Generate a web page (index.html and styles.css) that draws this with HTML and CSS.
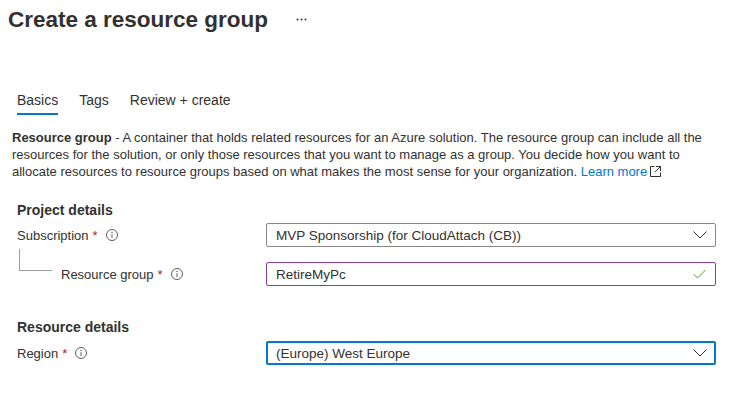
FILE: index.html
```html
<!DOCTYPE html>
<html lang="en">
<head>
<meta charset="utf-8">
<title>Create a resource group</title>
<link rel="stylesheet" href="styles.css">
</head>
<body>
<div class="page">
  <header class="titlebar">
    <h1 class="title">Create a resource group</h1>
    <span class="more" aria-label="More">
      <svg width="11" height="3" viewBox="0 0 11 3"><circle cx="1.5" cy="1.5" r="1" fill="#323130"/><circle cx="5.5" cy="1.5" r="1" fill="#323130"/><circle cx="9.5" cy="1.5" r="1" fill="#323130"/></svg>
    </span>
  </header>

  <nav class="tabs">
    <span class="tab active">Basics</span>
    <span class="tab">Tags</span>
    <span class="tab">Review + create</span>
  </nav>

  <p class="desc"><strong>Resource group</strong> - A container that holds related resources for an Azure solution. The resource group can include all the<br>resources for the solution, or only those resources that you want to manage as a group. You decide how you want to<br>allocate resources to resource groups based on what makes the most sense for your organization. <a class="link" href="#">Learn more<svg class="ext" width="11" height="11" viewBox="0 0 11 11"><path d="M4.5 0.5H0.5V10.5H10.5V6.5" fill="none" stroke="#323130" stroke-width="1"/><path d="M5 6L10.3 0.7M6 0.5H10.5V5" fill="none" stroke="#323130" stroke-width="1"/></svg></a></p>

  <h2 class="section">Project details</h2>

  <div class="row row-sub">
    <div class="label">
      <span>Subscription</span><span class="req">*</span>
      <svg class="info" width="12" height="12" viewBox="0 0 12 12"><circle cx="6" cy="6" r="5.5" fill="none" stroke="#605e5c" stroke-width="1"/><circle cx="6" cy="3.6" r="0.75" fill="#605e5c"/><path d="M6 5.2V9" stroke="#605e5c" stroke-width="1"/></svg>
    </div>
    <div class="field">
      <span>MVP Sponsorship (for CloudAttach (CB))</span>
      <svg class="chev" width="14" height="8" viewBox="0 0 14 8"><polyline points="0.5,0.5 7,7 13.5,0.5" fill="none" stroke="#323130" stroke-width="1"/></svg>
    </div>
  </div>

  <div class="row row-rg">
    <div class="label nested">
      <span class="connector"></span>
      <span>Resource group</span><span class="req">*</span>
      <svg class="info" width="12" height="12" viewBox="0 0 12 12"><circle cx="6" cy="6" r="5.5" fill="none" stroke="#605e5c" stroke-width="1"/><circle cx="6" cy="3.6" r="0.75" fill="#605e5c"/><path d="M6 5.2V9" stroke="#605e5c" stroke-width="1"/></svg>
    </div>
    <div class="field valid">
      <span>RetireMyPc</span>
      <svg class="check" width="13" height="10" viewBox="0 0 13 10"><polyline points="0.5,5 4.5,9 12.5,1" fill="none" stroke="#57a300" stroke-width="1"/></svg>
    </div>
  </div>

  <h2 class="section section-res">Resource details</h2>

  <div class="row row-region">
    <div class="label">
      <span>Region</span><span class="req">*</span>
      <svg class="info" width="12" height="12" viewBox="0 0 12 12"><circle cx="6" cy="6" r="5.5" fill="none" stroke="#605e5c" stroke-width="1"/><circle cx="6" cy="3.6" r="0.75" fill="#605e5c"/><path d="M6 5.2V9" stroke="#605e5c" stroke-width="1"/></svg>
    </div>
    <div class="field focus">
      <span>(Europe) West Europe</span>
      <svg class="chev" width="14" height="8" viewBox="0 0 14 8"><polyline points="0.5,0.5 7,7 13.5,0.5" fill="none" stroke="#323130" stroke-width="1"/></svg>
    </div>
  </div>
</div>
</body>
</html>
```

FILE: styles.css
```css
html, body {
  margin: 0;
  padding: 0;
  background: #ffffff;
}

body {
  font-family: "Liberation Sans", Arial, sans-serif;
  font-size: 13px;
  color: #323130;
}

.page {
  width: 749px;
  height: 401px;
  overflow: hidden;
}

.titlebar {
  display: flex;
  align-items: center;
  height: 32px;
  padding: 4px 0 0 8px;
}

.title {
  margin: 0;
  font-size: 22.5px;
  font-weight: 700;
  line-height: 32px;
  color: #323130;
}

.more {
  display: flex;
  margin-left: 28px;
  margin-top: -2px;
}

.tabs {
  display: flex;
  gap: 21px;
  margin-top: 54px;
  padding-left: 17px;
}

.tab {
  font-size: 14px;
  line-height: 20px;
  padding-bottom: 3px;
  border-bottom: 2px solid transparent;
  color: #323130;
}

.tab.active {
  border-bottom-color: #0078d4;
}

.desc {
  margin: 14px 0 0;
  padding-left: 12px;
  line-height: 17px;
  white-space: nowrap;
}

.desc strong {
  font-weight: 700;
}

.link {
  color: #0078d4;
  text-decoration: none;
}

.ext {
  margin-left: 3px;
  vertical-align: -1px;
}

.section {
  margin: 20px 0 0;
  padding-left: 17px;
  font-size: 14px;
  font-weight: 700;
  line-height: 20px;
}

.section-res {
  margin-top: 31px;
}

.row {
  display: flex;
  align-items: stretch;
  padding-left: 17px;
}

.row-sub {
  margin-top: 3px;
}

.row-rg {
  margin-top: 15px;
}

.row-region {
  margin-top: 4px;
}

.label {
  width: 249px;
  display: flex;
  align-items: center;
  line-height: 17px;
}

.req {
  color: #a4262c;
  margin-left: 4px;
}

.info {
  margin-left: 8px;
}

.connector {
  align-self: flex-start;
  box-sizing: border-box;
  width: 33px;
  height: 22px;
  margin: -13px 9px 0 2px;
  border-left: 1px solid #a19f9d;
  border-bottom: 1px solid #a19f9d;
}

.field {
  box-sizing: border-box;
  width: 450px;
  height: 24px;
  display: flex;
  align-items: center;
  justify-content: space-between;
  padding: 0 8px 0 9px;
  border: 1px solid #8a8886;
  border-radius: 2px;
  font-size: 13.5px;
}

.field.valid {
  border-color: #8a3d9c;
}

.field.focus {
  border: 2px solid #0078d4;
  padding-left: 8px;
  padding-right: 7px;
}

.check {
  margin-right: 1px;
}
```
